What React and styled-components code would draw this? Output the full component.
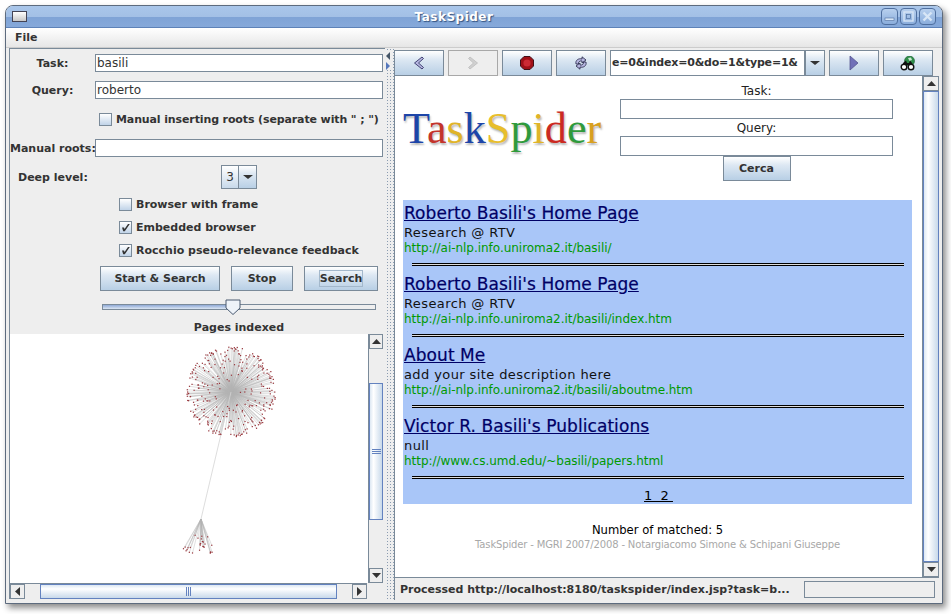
import styled, { createGlobalStyle } from "styled-components";

const GlobalStyle = createGlobalStyle`
  html, body {
    margin: 0;
    padding: 0;
    background: #ffffff;
  }
`;

const border = "#7a8a99";
const oceanBlue = "#6382bf";
const panelBg = "#eeeeee";
const uiFont = `"DejaVu Sans", sans-serif`;
const buttonGradient = "linear-gradient(#ffffff 0%, #dde8f3 35%, #b8cfe5 100%)";

const Frame = styled.div`
  width: 951px;
  height: 614px;
  padding: 5px 0 0 5px;
  box-sizing: border-box;
  overflow: hidden;
`;

const Window = styled.div`
  width: 938px;
  height: 599px;
  box-sizing: border-box;
  display: flex;
  flex-direction: column;
  border: 1px solid #5d6b7e;
  border-radius: 8px 8px 0 0;
  background: ${panelBg};
  box-shadow: 3px 4px 6px rgba(0, 0, 0, 0.45);
  font-family: ${uiFont};
  color: #333333;
`;

const TitleBar = styled.div`
  height: 21px;
  display: flex;
  align-items: center;
  padding: 0 6px;
  border-radius: 7px 7px 0 0;
  border-bottom: 1px solid #5d82b8;
  background: linear-gradient(#a9c6ea 0%, #a3c0e6 50%, #7fa3d6 52%, #86a9da 100%);
`;

const WindowIcon = styled.div`
  width: 13px;
  height: 9px;
  border: 1px solid #445;
  background: linear-gradient(#ffffff, #c8c8c8);
`;

const Title = styled.div`
  flex: 1;
  text-align: center;
  color: #ffffff;
  font-size: 12px;
  font-weight: bold;
  letter-spacing: 0.5px;
  text-shadow: 1px 1px 1px #33527f;
`;

const TitleButtons = styled.div`
  display: flex;
  gap: 2px;
`;

const TitleButton = styled.div`
  width: 17px;
  height: 17px;
  box-sizing: border-box;
  border: 1px solid #4f6f9f;
  border-radius: 4px;
  background: linear-gradient(#b8d0ee, #8aaddc);
  display: flex;
  align-items: center;
  justify-content: center;
`;

const MenuBar = styled.div`
  height: 19px;
  display: flex;
  align-items: center;
  padding-left: 9px;
  font-size: 11px;
  font-weight: bold;
  background: linear-gradient(#ffffff, #e6e6e6);
  border-bottom: 1px solid #cccccc;
`;

const Split = styled.div`
  flex: 1;
  display: flex;
  min-height: 0;
  padding: 0 3px 3px 3px;
`;

const LeftPanel = styled.div`
  width: 376px;
  display: flex;
  flex-direction: column;
  box-sizing: border-box;
  margin-bottom: 1px;
  border-left: 1px solid ${border};
  border-top: 1px solid ${border};
  font-size: 11px;
  font-weight: bold;
  white-space: nowrap;
`;

const Row = styled.div`
  display: flex;
  align-items: center;
  height: ${(p) => p.$h || 18}px;
  margin-top: ${(p) => p.$top || 0}px;
  padding-left: ${(p) => p.$left || 0}px;
  padding-right: 2px;
  letter-spacing: ${(p) => p.$spacing || 0}px;
  flex-shrink: 0;
`;

const FieldLabel = styled.label`
  width: ${(p) => p.$w || 85}px;
  flex-shrink: 0;
  text-align: ${(p) => p.$align || "center"};
  white-space: nowrap;
`;

const Input = styled.div`
  flex: 1;
  height: 18px;
  box-sizing: border-box;
  border: 1px solid ${border};
  background: #ffffff;
  padding-left: 1px;
  font-weight: normal;
  font-size: 12px;
  line-height: 16px;
  color: #333333;
`;

const Box = styled.span`
  width: 13px;
  height: 13px;
  box-sizing: border-box;
  border: 1px solid ${border};
  background: linear-gradient(#ffffff, #c0d3e8);
  display: inline-flex;
  align-items: center;
  justify-content: center;
  margin-right: 4px;
  flex-shrink: 0;
`;

const Combo = styled.div`
  margin-left: 125px;
  height: 24px;
  width: 36px;
  box-sizing: border-box;
  display: flex;
  border: 1px solid ${border};
  background: #ffffff;
  font-weight: normal;
  font-size: 12px;
`;

const ComboValue = styled.div`
  width: 16px;
  text-align: center;
  line-height: 22px;
  background: linear-gradient(#ffffff, #c8d9ea);
  border-right: 1px solid ${border};
`;

const ComboArrow = styled.div`
  flex: 1;
  background: ${buttonGradient};
  display: flex;
  align-items: center;
  justify-content: center;
`;

const Triangle = styled.span`
  width: 0;
  height: 0;
  border-left: ${(p) => p.$size || 5}px solid transparent;
  border-right: ${(p) => p.$size || 5}px solid transparent;
  border-top: ${(p) => (p.$size || 5) - 1}px solid #333333;
`;

const Buttons = styled.div`
  display: flex;
  gap: 11px;
  margin-top: 9px;
  padding-left: 90px;
  flex-shrink: 0;
`;

const Button = styled.button`
  width: ${(p) => p.$w}px;
  height: 25px;
  padding: 0;
  border: 1px solid ${border};
  background: ${buttonGradient};
  font-family: ${uiFont};
  font-size: 11px;
  font-weight: bold;
  color: #333333;
`;

const Focus = styled.span`
  border: 1px solid #a3b8cc;
  padding: 1px 0;
`;

const Slider = styled.div`
  position: relative;
  height: 16px;
  margin: 8px 0 0 92px;
  width: 274px;
  flex-shrink: 0;
`;

const Track = styled.div`
  height: 6px;
  margin-top: 5px;
  box-sizing: border-box;
  border: 1px solid ${border};
  background: ${panelBg};
  overflow: hidden;
`;

const TrackFill = styled.div`
  height: 100%;
  width: ${(p) => p.$width}px;
  background: linear-gradient(#8fa9d6, #dbe6f3);
`;

const Thumb = styled.svg`
  position: absolute;
  top: 0;
  left: ${(p) => p.$left}px;
`;

const SliderCaption = styled.div`
  height: 19px;
  padding-left: 90px;
  line-height: 26px;
  text-align: center;
  width: 368px;
  box-sizing: border-box;
  flex-shrink: 0;
  overflow: hidden;
`;

const GraphArea = styled.div`
  flex: 1;
  display: flex;
  min-height: 0;
  padding-right: 2px;
`;

const Canvas = styled.div`
  flex: 1;
  background: #ffffff;
  overflow: hidden;
`;

const VBar = styled.div`
  width: ${(p) => p.$w || 15}px;
  display: flex;
  flex-direction: column;
  flex-shrink: 0;
  box-sizing: border-box;
  border-left: 1px solid ${border};
  background: ${panelBg};
`;

const HBar = styled.div`
  height: 16px;
  display: flex;
  flex-shrink: 0;
  margin-right: 18px;
  box-sizing: border-box;
  background: ${panelBg};
  border-top: 1px solid ${border};
`;

const ArrowCell = styled.div`
  width: ${(p) => (p.$horizontal ? "15px" : "100%")};
  height: ${(p) => (p.$horizontal ? "100%" : "15px")};
  flex-shrink: 0;
  box-sizing: border-box;
  border: 1px solid ${border};
  background: ${panelBg};
  display: flex;
  align-items: center;
  justify-content: center;
`;

const Gutter = styled.div`
  flex: ${(p) => p.$grow || 0} 0 ${(p) => p.$size || 0}px;
`;

const Knob = styled.div`
  flex: ${(p) => p.$grow || 0} 0 ${(p) => p.$size || 0}px;
  box-sizing: border-box;
  border: 1px solid ${oceanBlue};
  background: ${(p) =>
    p.$vertical
      ? "linear-gradient(90deg, #dde8f3, #ffffff 30%, #c8d9ea)"
      : "linear-gradient(#dde8f3, #ffffff 30%, #c8d9ea)"};
  display: flex;
  align-items: center;
  justify-content: center;
`;

const Grip = styled.div`
  display: flex;
  flex-direction: ${(p) => (p.$vertical ? "column" : "row")};
  gap: 1px;
  & > span {
    background: ${oceanBlue};
    width: ${(p) => (p.$vertical ? "9px" : "1px")};
    height: ${(p) => (p.$vertical ? "1px" : "9px")};
  }
`;

const Divider = styled.div`
  width: 9px;
  flex-shrink: 0;
  position: relative;
  background-image: radial-gradient(#8a9bb0 0.6px, transparent 0.8px);
  background-size: 3px 3px;
  background-position: 1px 0;
`;

const DividerArrows = styled.svg`
  position: absolute;
  top: 2px;
  left: 0;
  background: ${panelBg};
`;

const RightPanel = styled.div`
  flex: 1;
  min-width: 0;
  display: flex;
  flex-direction: column;
  border-top: 1px solid transparent;
`;

const Toolbar = styled.div`
  display: flex;
  height: 26px;
  margin-top: 1px;
  flex-shrink: 0;
`;

const ToolButton = styled.div`
  width: 50px;
  box-sizing: border-box;
  border: 1px solid ${(p) => (p.$off ? "#a8a8a8" : border)};
  background: ${(p) => (p.$off ? panelBg : buttonGradient)};
  display: flex;
  align-items: center;
  justify-content: center;
  margin-right: ${(p) => (p.$gap === undefined ? 4 : p.$gap)}px;
`;

const UrlField = styled.div`
  width: 195px;
  box-sizing: border-box;
  border: 1px solid ${border};
  background: #ffffff;
  font-size: 11px;
  font-weight: bold;
  letter-spacing: -0.2px;
  line-height: 24px;
  white-space: nowrap;
  color: #333333;
  padding-left: 1px;
`;

const UrlDrop = styled.div`
  width: 20px;
  box-sizing: border-box;
  border: 1px solid ${border};
  background: ${buttonGradient};
  display: flex;
  align-items: center;
  justify-content: center;
  margin-right: 4px;
`;

const Viewport = styled.div`
  flex: 1;
  min-height: 0;
  display: flex;
  border-left: 1px solid ${border};
  border-bottom: 1px solid ${border};
`;

const Page = styled.div`
  flex: 1;
  min-width: 0;
  background: #ffffff;
  padding: 0 10px 0 8px;
  font-family: ${uiFont};
  font-weight: normal;
  color: #000000;
`;

const Header = styled.div`
  height: 124px;
  display: flex;
`;

const Logo = styled.div`
  width: 217px;
  padding-top: 25px;
  font-family: "Liberation Serif", serif;
  font-size: 44.2px;
  line-height: 56px;
  white-space: nowrap;
  text-shadow: 1px 2px 2px rgba(0, 0, 0, 0.28);
`;

const Letter = styled.span`
  color: ${(p) => p.$color};
`;

const SearchForm = styled.div`
  width: 273px;
  display: flex;
  flex-direction: column;
  align-items: center;
  padding-top: 6px;
  font-size: 12px;
  color: #222222;
`;

const FormLabel = styled.div`
  height: 17px;
  line-height: 18px;
`;

const FormInput = styled.div`
  width: 100%;
  height: 20px;
  flex-shrink: 0;
  box-sizing: border-box;
  border: 1px solid ${border};
  background: #ffffff;
`;

const SubmitButton = styled(Button)`
  width: 68px;
  flex-shrink: 0;
`;

const Results = styled.div`
  background: #a9c6f8;
  height: 304px;
  padding: 3px 0 0 1px;
  box-sizing: border-box;
`;

const Result = styled.div`
  height: 71px;
  display: flex;
  flex-direction: column;
`;

const ResultTitle = styled.a`
  height: 20px;
  font-size: 17px;
  line-height: 20px;
  letter-spacing: 0.07px;
  -webkit-text-stroke: 0.2px #000066;
  color: #000066;
  text-decoration: underline;
  white-space: nowrap;
`;

const ResultText = styled.div`
  height: 18px;
  font-size: 13px;
  line-height: 20px;
  letter-spacing: 0.4px;
  color: #111111;
`;

const ResultUrl = styled.div`
  height: 14px;
  font-size: 12px;
  line-height: 14px;
  letter-spacing: -0.03px;
  color: #009900;
`;

const Rule = styled.div`
  height: 3px;
  box-sizing: border-box;
  margin: 8px 8px 0 8px;
  border-top: 1px solid #000000;
  border-bottom: 1px solid #000000;
  background: #dddddd;
`;

const Pager = styled.div`
  text-align: center;
  font-size: 13px;
  line-height: 18px;
  padding-left: 1px;
  white-space: pre;
  text-decoration: underline;
`;

const Footer = styled.div`
  text-align: center;
  padding-top: 19px;
  font-size: 11.6px;
  line-height: 15px;
`;

const Credits = styled.div`
  font-size: 10px;
  line-height: 13px;
  color: #a8a8a8;
  letter-spacing: -0.15px;
`;

const StatusBar = styled.div`
  height: 22px;
  flex-shrink: 0;
  display: flex;
  align-items: center;
  border-left: 1px solid ${border};
  padding-left: 5px;
  font-size: 11px;
  font-weight: bold;
  white-space: nowrap;
`;

const StatusText = styled.div`
  width: 404px;
`;

const StatusBox = styled.div`
  width: 131px;
  height: 17px;
  box-sizing: border-box;
  border: 1px solid ${border};
`;

// fixed seed so the graph stays the same on every render
const makeRandom = (seed) => {
  let s = seed;
  return () => {
    s = (s * 16807) % 2147483647;
    return (s - 1) / 2147483646;
  };
};

const buildGraph = () => {
  const rand = makeRandom(4217);
  const hub = { x: 221, y: 58 };
  const leaf = { x: 191, y: 185 };
  const disc = [];
  const golden = Math.PI * (3 - Math.sqrt(5));
  for (let i = 0; i < 300; i++) {
    const outer = i % 5 < 2;
    const angle = i * golden + rand() * 0.06;
    const r = outer ? 41 + rand() * 4 : 8 + Math.sqrt(rand()) * 33;
    disc.push({ x: hub.x + Math.cos(angle) * r, y: hub.y + Math.sin(angle) * r });
  }
  const fan = [];
  for (let i = 0; i < 28; i++) {
    const theta = -0.55 + rand() * 0.95;
    const r = 17 + rand() * 20;
    fan.push({ x: leaf.x + Math.sin(theta) * r, y: leaf.y + Math.cos(theta) * r });
  }
  return { hub, leaf, disc, fan };
};

const graph = buildGraph();

const Graph = () => (
  <svg width="358" height="249" viewBox="0 0 358 249">
    <g stroke="#808080" strokeWidth="0.4" opacity="0.6">
      {graph.disc.map((n, i) => (
        <line key={i} x1={graph.hub.x} y1={graph.hub.y} x2={n.x} y2={n.y} />
      ))}
      {graph.fan.map((n, i) => (
        <line key={i} x1={graph.leaf.x} y1={graph.leaf.y} x2={n.x} y2={n.y} />
      ))}
    </g>
    <line x1={graph.hub.x} y1={graph.hub.y} x2={graph.leaf.x} y2={graph.leaf.y} stroke="#d4d4d4" strokeWidth="0.8" />
    <g fill="#98343a">
      {graph.disc.concat(graph.fan).map((n, i) => (
        <rect key={i} x={n.x - 0.6} y={n.y - 0.6} width="1.2" height="1.2" />
      ))}
    </g>
  </svg>
);

const Check = () => (
  <svg width="9" height="9" viewBox="0 0 9 9">
    <path d="M1 4.5 L3 4.5 L3.6 6 L7 1 L8.8 1 L3.8 8.2 L2.2 8.2 Z" fill="#333333" />
  </svg>
);

const BackIcon = ({ fill = "#b6b6e0", stroke = "#333366" }) => (
  <svg width="12" height="14" viewBox="0 0 12 14">
    <path d="M9 1 L1.5 7 L9 13 L10.5 11.5 L5.5 7 L10.5 2.5 Z" fill={fill} stroke={stroke} strokeWidth="0.9" />
  </svg>
);

const ForwardIcon = () => (
  <svg width="12" height="14" viewBox="0 0 12 14">
    <path d="M3 1 L10.5 7 L3 13 L1.5 11.5 L6.5 7 L1.5 2.5 Z" fill="#d0d0d0" stroke="#c0c0c0" strokeWidth="0.9" />
  </svg>
);

const StopIcon = () => (
  <svg width="14" height="14" viewBox="0 0 14 14">
    <path d="M4 .5 H10 L13.5 4 V10 L10 13.5 H4 L.5 10 V4 Z" fill="#a01018" stroke="#401018" />
    <circle cx="7" cy="7" r="3.6" fill="#cc2a34" />
  </svg>
);

const RefreshIcon = () => (
  <svg width="14" height="14" viewBox="0 0 14 14">
    <path d="M2 8 C1 4 5 2 8 3 L8 .8 L12 4 L8 7 L8 5 C6 4.5 4 6 4.5 8 Z" fill="#b6b6e0" stroke="#222244" strokeWidth="0.8" />
    <path d="M12 6 C13 10 9 12 6 11 L6 13.2 L2 10 L6 7 L6 9 C8 9.5 10 8 9.5 6 Z" fill="#b6b6e0" stroke="#222244" strokeWidth="0.8" />
  </svg>
);

const GoIcon = () => (
  <svg width="10" height="16" viewBox="0 0 10 16">
    <path d="M1 1 L9 8 L1 15 Z" fill="#7070b8" stroke="#555590" strokeWidth="0.8" />
  </svg>
);

const FindIcon = () => (
  <svg width="16" height="15" viewBox="0 0 16 15">
    <circle cx="9.5" cy="5" r="5" fill="#2f8f4a" stroke="#1d5a30" strokeWidth="0.6" />
    <path d="M8 2 L11 1.5 L12 4 L9.5 5 Z" fill="#c8e8d0" />
    <path d="M3 7 L6 4.5 L7 7 L9 7 L10 4.5 L12 7 L13 9 H8 H3 Z" fill="#111111" />
    <circle cx="4" cy="11" r="2.8" fill="#ffffff" stroke="#111111" strokeWidth="1.4" />
    <circle cx="11" cy="11" r="2.8" fill="#ffffff" stroke="#111111" strokeWidth="1.4" />
  </svg>
);

const Minimize = () => (
  <svg width="11" height="11" viewBox="0 0 11 11">
    <rect x="1" y="7" width="9" height="2.5" fill="#d8e6f6" stroke="#4f6f9f" strokeWidth="0.6" />
  </svg>
);

const Maximize = () => (
  <svg width="11" height="11" viewBox="0 0 11 11">
    <rect x="1" y="1" width="9" height="9" fill="none" stroke="#d8e6f6" strokeWidth="1.4" />
    <rect x="3.5" y="3.5" width="4" height="4" fill="none" stroke="#4f6f9f" strokeWidth="0.7" />
  </svg>
);

const Close = () => (
  <svg width="11" height="11" viewBox="0 0 11 11">
    <path d="M1.5 1.5 L9.5 9.5 M9.5 1.5 L1.5 9.5" stroke="#d8e6f6" strokeWidth="2.4" />
  </svg>
);

const ArrowGlyph = ({ dir }) => {
  const shapes = {
    up: "M0 5 L4.5 0 L9 5 Z",
    down: "M0 0 L9 0 L4.5 5 Z",
    left: "M6 0 L6 9 L1 4.5 Z",
    right: "M1 0 L1 9 L6 4.5 Z",
  };
  const flat = dir === "up" || dir === "down";
  return (
    <svg width={flat ? 9 : 7} height={flat ? 5 : 9} viewBox={flat ? "0 0 9 5" : "0 0 7 9"}>
      <path d={shapes[dir]} fill="#333333" />
    </svg>
  );
};

const LogoText = () => {
  const colors = ["#1d45a8", "#c3342c", "#e0b428", "#1d45a8", "#e8be2c", "#2f9a3c", "#e0b428", "#cb2a22", "#2f9a3c", "#d8a020"];
  return (
    <Logo>
      {"TaskSpider".split("").map((c, i) => (
        <Letter key={i} $color={colors[i]}>
          {c}
        </Letter>
      ))}
    </Logo>
  );
};

const results = [
  { title: "Roberto Basili's Home Page", text: "Research @ RTV", url: "http://ai-nlp.info.uniroma2.it/basili/" },
  { title: "Roberto Basili's Home Page", text: "Research @ RTV", url: "http://ai-nlp.info.uniroma2.it/basili/index.htm" },
  { title: "About Me", text: "add your site description here", url: "http://ai-nlp.info.uniroma2.it/basili/aboutme.htm" },
  { title: "Victor R. Basili's Publications", text: "null", url: "http://www.cs.umd.edu/~basili/papers.html" },
];

const App = () => {
  return (
    <Frame>
      <GlobalStyle />
      <Window>
        <TitleBar>
          <WindowIcon />
          <Title>TaskSpider</Title>
          <TitleButtons>
            <TitleButton><Minimize /></TitleButton>
            <TitleButton><Maximize /></TitleButton>
            <TitleButton><Close /></TitleButton>
          </TitleButtons>
        </TitleBar>
        <MenuBar>File</MenuBar>
        <Split>
          <LeftPanel>
            <Row $top={5}>
              <FieldLabel>Task:</FieldLabel>
              <Input>basili</Input>
            </Row>
            <Row $top={9}>
              <FieldLabel>Query:</FieldLabel>
              <Input>roberto</Input>
            </Row>
            <Row $top={14} $h={13} $left={89} $spacing={-0.12}>
              <Box />
              Manual inserting roots (separate with " ; ")
            </Row>
            <Row $top={13}>
              <FieldLabel $align="left">Manual roots:</FieldLabel>
              <Input />
            </Row>
            <Row $top={8} $h={24} $left={8}>
              <FieldLabel $align="left" $w={78}>Deep level:</FieldLabel>
              <Combo>
                <ComboValue>3</ComboValue>
                <ComboArrow><Triangle /></ComboArrow>
              </Combo>
            </Row>
            <Row $top={9} $h={13} $left={109}>
              <Box />
              Browser with frame
            </Row>
            <Row $top={10} $h={13} $left={109}>
              <Box><Check /></Box>
              Embedded browser
            </Row>
            <Row $top={10} $h={13} $left={109}>
              <Box><Check /></Box>
              Rocchio pseudo-relevance feedback
            </Row>
            <Buttons>
              <Button $w={120}>Start &amp; Search</Button>
              <Button $w={62}>Stop</Button>
              <Button $w={74}><Focus>Search</Focus></Button>
            </Buttons>
            <Slider>
              <Track>
                <TrackFill $width={123} />
              </Track>
              <Thumb $left={123} width="16" height="16" viewBox="0 0 16 16">
                <path d="M1 1 H15 V9 L8 15.5 L1 9 Z" fill="#eef3f9" stroke="#4a5a70" />
              </Thumb>
            </Slider>
            <SliderCaption>Pages indexed</SliderCaption>
            <GraphArea>
              <Canvas><Graph /></Canvas>
              <VBar>
                <ArrowCell><ArrowGlyph dir="up" /></ArrowCell>
                <Gutter $size={34} />
                <Knob $vertical $size={137}>
                  <Grip $vertical><span /><span /><span /></Grip>
                </Knob>
                <Gutter $grow={1} />
                <ArrowCell><ArrowGlyph dir="down" /></ArrowCell>
              </VBar>
            </GraphArea>
            <HBar>
              <ArrowCell $horizontal><ArrowGlyph dir="left" /></ArrowCell>
              <Gutter $size={15} />
              <Knob $size={297}>
                <Grip><span /><span /><span /></Grip>
              </Knob>
              <Gutter $grow={1} />
              <ArrowCell $horizontal><ArrowGlyph dir="right" /></ArrowCell>
            </HBar>
          </LeftPanel>
          <Divider>
            <DividerArrows width="6" height="20" viewBox="0 0 6 20">
              <path d="M5 2 L1 6 L5 10 Z" fill="#445566" />
              <path d="M1 12 L5 16 L1 20 Z" fill="#5577bb" />
            </DividerArrows>
          </Divider>
          <RightPanel>
            <Toolbar>
              <ToolButton><BackIcon /></ToolButton>
              <ToolButton $off><ForwardIcon /></ToolButton>
              <ToolButton><StopIcon /></ToolButton>
              <ToolButton><RefreshIcon /></ToolButton>
              <UrlField>e=0&amp;index=0&amp;do=1&amp;type=1&amp;</UrlField>
              <UrlDrop><Triangle /></UrlDrop>
              <ToolButton><GoIcon /></ToolButton>
              <ToolButton $gap={0}><FindIcon /></ToolButton>
            </Toolbar>
            <Viewport>
              <Page>
                <Header>
                  <LogoText />
                  <SearchForm>
                    <FormLabel>Task:</FormLabel>
                    <FormInput />
                    <FormLabel>Query:</FormLabel>
                    <FormInput />
                    <SubmitButton $w={68}>Cerca</SubmitButton>
                  </SearchForm>
                </Header>
                <Results>
                  {results.map((r) => (
                    <Result key={r.url}>
                      <ResultTitle>{r.title}</ResultTitle>
                      <ResultText>{r.text}</ResultText>
                      <ResultUrl>{r.url}</ResultUrl>
                      <Rule />
                    </Result>
                  ))}
                  <Pager>{"1  2 "}</Pager>
                </Results>
                <Footer>
                  Number of matched: 5
                  <Credits>TaskSpider - MGRI 2007/2008 - Notargiacomo Simone &amp; Schipani Giuseppe</Credits>
                </Footer>
              </Page>
              <VBar $w={17}>
                <ArrowCell><ArrowGlyph dir="up" /></ArrowCell>
                <Knob $vertical $grow={1} />
                <ArrowCell><ArrowGlyph dir="down" /></ArrowCell>
              </VBar>
            </Viewport>
            <StatusBar>
              <StatusText>Processed http://localhost:8180/taskspider/index.jsp?task=b...</StatusText>
              <StatusBox />
            </StatusBar>
          </RightPanel>
        </Split>
      </Window>
    </Frame>
  );
};

export default App;
